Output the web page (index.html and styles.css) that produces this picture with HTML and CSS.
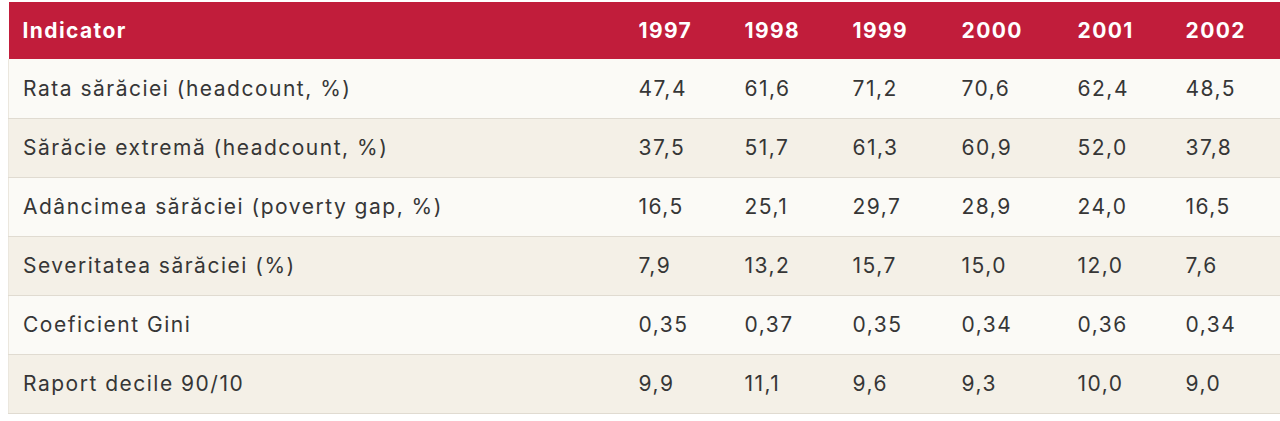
FILE: index.html
```html
<!DOCTYPE html>
<html lang="ro">
<head>
<meta charset="utf-8">
<title>Indicatori sărăcie</title>
<link rel="stylesheet" href="styles.css">
</head>
<body>
<div class="wrap">
<table class="data">
  <colgroup>
    <col class="c-ind"><col class="c-97"><col class="c-98"><col class="c-99"><col class="c-00"><col class="c-01"><col class="c-02">
  </colgroup>
  <thead>
    <tr><th>Indicator</th><th>1997</th><th>1998</th><th>1999</th><th>2000</th><th>2001</th><th>2002</th></tr>
  </thead>
  <tbody>
    <tr><td>Rata sărăciei (headcount, %)</td><td>47,4</td><td>61,6</td><td>71,2</td><td>70,6</td><td>62,4</td><td>48,5</td></tr>
    <tr><td>Sărăcie extremă (headcount, %)</td><td>37,5</td><td>51,7</td><td>61,3</td><td>60,9</td><td>52,0</td><td>37,8</td></tr>
    <tr><td>Adâncimea sărăciei (poverty gap, %)</td><td>16,5</td><td>25,1</td><td>29,7</td><td>28,9</td><td>24,0</td><td>16,5</td></tr>
    <tr><td>Severitatea sărăciei (%)</td><td>7,9</td><td>13,2</td><td>15,7</td><td>15,0</td><td>12,0</td><td>7,6</td></tr>
    <tr><td>Coeficient Gini</td><td>0,35</td><td>0,37</td><td>0,35</td><td>0,34</td><td>0,36</td><td>0,34</td></tr>
    <tr><td>Raport decile 90/10</td><td>9,9</td><td>11,1</td><td>9,6</td><td>9,3</td><td>10,0</td><td>9,0</td></tr>
  </tbody>
</table>
</div>
</body>
</html>
```

FILE: styles.css
```css
html, body {
  margin: 0;
  padding: 0;
  background: #ffffff;
}
.wrap {
  padding: 2px 0 0 8px;
  overflow: hidden;
}
.data {
  border-collapse: collapse;
  table-layout: fixed;
  width: 1290px;
  font-family: "Inter", "Open Sans", sans-serif;
  font-size: 21px;
  letter-spacing: 1.5px;
  color: #363636;
}
.c-ind { width: 616px; }
.c-97 { width: 106px; }
.c-98 { width: 108px; }
.c-99 { width: 109px; }
.c-00 { width: 116px; }
.c-01 { width: 108px; }
.c-02 { width: 127px; }
.data th {
  background: #c11d3b;
  color: #ffffff;
  font-weight: 700;
  text-align: left;
  height: 57px;
  padding: 0 0 0 14px;
  box-sizing: border-box;
  letter-spacing: 1.4px;
}
.data td {
  height: 59px;
  padding: 0 0 0 14px;
  box-sizing: border-box;
  border-bottom: 1px solid #e0dbd1;
  white-space: nowrap;
}
.data tbody tr:nth-child(odd) td { background: #fbfaf6; }
.data tbody tr:nth-child(even) td { background: #f4f0e7; }
.data tbody td:first-child { border-left: 1px solid #ebe7de; }
```
